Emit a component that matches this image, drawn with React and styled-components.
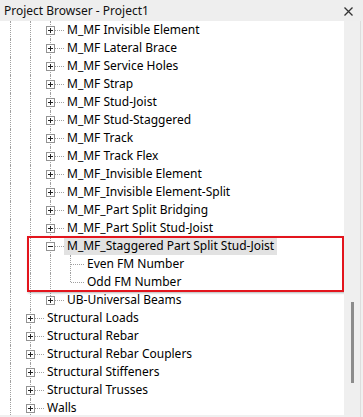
import React from "react";
import styled, { createGlobalStyle } from "styled-components";

const GlobalStyle = createGlobalStyle`
  html, body {
    margin: 0;
    padding: 0;
    background: #f0f0f0;
  }
  body {
    font-family: "Noto Sans", "Open Sans", sans-serif;
  }
`;

const Window = styled.div`
  width: 363px;
  height: 417px;
  display: flex;
  flex-direction: column;
  background: #f0f0f0;
  overflow: hidden;
`;

const TitleBar = styled.div`
  height: 21px;
  display: flex;
  align-items: center;
  justify-content: space-between;
  padding: 0 10px 0 4px;
  background: #eeeeee;
`;

const Title = styled.span`
  font-size: 12px;
  color: #111;
`;

const Close = styled.svg`
  width: 9px;
  height: 9px;
  margin-top: 2px;
`;

const Body = styled.div`
  display: flex;
  height: 396px;
`;

const TreePanel = styled.div`
  position: relative;
  width: 344px;
  height: 394px;
  background: #fff;
  overflow: hidden;
`;

const Row = styled.div`
  display: flex;
  align-items: center;
  height: 18px;
`;

const Guide = styled.div`
  position: relative;
  width: 20px;
  height: 18px;
  flex: none;
  &::before {
    content: "";
    display: ${(p) => (p.$line ? "block" : "none")};
    position: absolute;
    left: 10px;
    top: 0;
    height: 18px;
    border-left: 1px dotted #a0a0a0;
  }
`;

const Connector = styled.div`
  position: relative;
  width: 24px;
  height: 18px;
  flex: none;
  &::before {
    content: "";
    position: absolute;
    left: 10px;
    top: 0;
    height: ${(p) => (p.$last ? "9px" : "18px")};
    border-left: 1px dotted #a0a0a0;
  }
  &::after {
    content: "";
    position: absolute;
    left: 11px;
    right: 0;
    top: 9px;
    border-top: 1px dotted #a0a0a0;
  }
`;

const Expander = styled.span`
  position: absolute;
  z-index: 1;
  left: 6px;
  top: 5px;
  width: 9px;
  height: 9px;
  box-sizing: border-box;
  border: 1px solid #939393;
  background: #fff;
  &::before {
    content: "";
    position: absolute;
    left: 1px;
    top: 3px;
    width: 5px;
    height: 1px;
    background: #222;
  }
  &::after {
    content: "";
    display: ${(p) => (p.$open ? "none" : "block")};
    position: absolute;
    left: 3px;
    top: 1px;
    width: 1px;
    height: 5px;
    background: #222;
  }
`;

const Label = styled.span`
  font-size: 12px;
  line-height: 18px;
  padding: 0 3px;
  color: #000;
  white-space: nowrap;
  background: ${(p) => (p.$selected ? "#e2e2e2" : "transparent")};
`;

const Callout = styled.div`
  position: absolute;
  left: 27px;
  top: 215px;
  width: 317px;
  height: 56px;
  box-sizing: border-box;
  border: 2px solid #e3151d;
  box-shadow: 1px 1px 2px rgba(0, 0, 0, 0.3);
  pointer-events: none;
`;

const ScrollTrack = styled.div`
  width: 16px;
  height: 396px;
  background: #efefef;
  border-right: 1px solid #dddddd;
  display: flex;
  justify-content: center;
`;

const ScrollThumb = styled.div`
  width: 3px;
  margin-left: 1px;
  background: #8c8c8c;
`;

const rows = [
  { level: 2, text: "M_MF Invisible Element", box: true },
  { level: 2, text: "M_MF Lateral Brace", box: true },
  { level: 2, text: "M_MF Service Holes", box: true },
  { level: 2, text: "M_MF Strap", box: true },
  { level: 2, text: "M_MF Stud-Joist", box: true },
  { level: 2, text: "M_MF Stud-Staggered", box: true },
  { level: 2, text: "M_MF Track", box: true },
  { level: 2, text: "M_MF Track Flex", box: true },
  { level: 2, text: "M_MF_Invisible Element", box: true },
  { level: 2, text: "M_MF_Invisible Element-Split", box: true },
  { level: 2, text: "M_MF_Part Split Bridging", box: true },
  { level: 2, text: "M_MF_Part Split Stud-Joist", box: true },
  { level: 2, text: "M_MF_Staggered Part Split Stud-Joist", box: true, open: true, selected: true },
  { level: 3, text: "Even FM Number", guides: [true, true, true] },
  { level: 3, text: "Odd FM Number", guides: [true, true, true], last: true },
  { level: 2, text: "UB-Universal Beams", box: true, last: true },
  { level: 1, text: "Structural Loads", box: true },
  { level: 1, text: "Structural Rebar", box: true },
  { level: 1, text: "Structural Rebar Couplers", box: true },
  { level: 1, text: "Structural Stiffeners", box: true },
  { level: 1, text: "Structural Trusses", box: true },
  { level: 1, text: "Walls", box: true },
];

const TreeRow = ({ row }) => {
  const guides = row.guides || Array.from({ length: row.level }, () => true);
  return (
    <Row>
      {guides.map((line, i) => (
        <Guide key={i} $line={line} />
      ))}
      <Connector $last={row.last}>
        {row.box && <Expander $open={row.open} />}
      </Connector>
      <Label $selected={row.selected}>{row.text}</Label>
    </Row>
  );
};

export default function App() {
  return (
    <>
      <GlobalStyle />
      <Window>
        <TitleBar>
          <Title>Project Browser - Project1</Title>
          <Close viewBox="0 0 9 9">
            <path d="M0.5 0.5L8.5 8.5M8.5 0.5L0.5 8.5" stroke="#333" strokeWidth="1.3" />
          </Close>
        </TitleBar>
        <Body>
          <TreePanel>
            {rows.map((row, i) => (
              <TreeRow key={i} row={row} />
            ))}
            <Callout />
          </TreePanel>
          <ScrollTrack>
            <ScrollThumb style={{ marginTop: 281, height: 81 }} />
          </ScrollTrack>
        </Body>
      </Window>
    </>
  );
}
